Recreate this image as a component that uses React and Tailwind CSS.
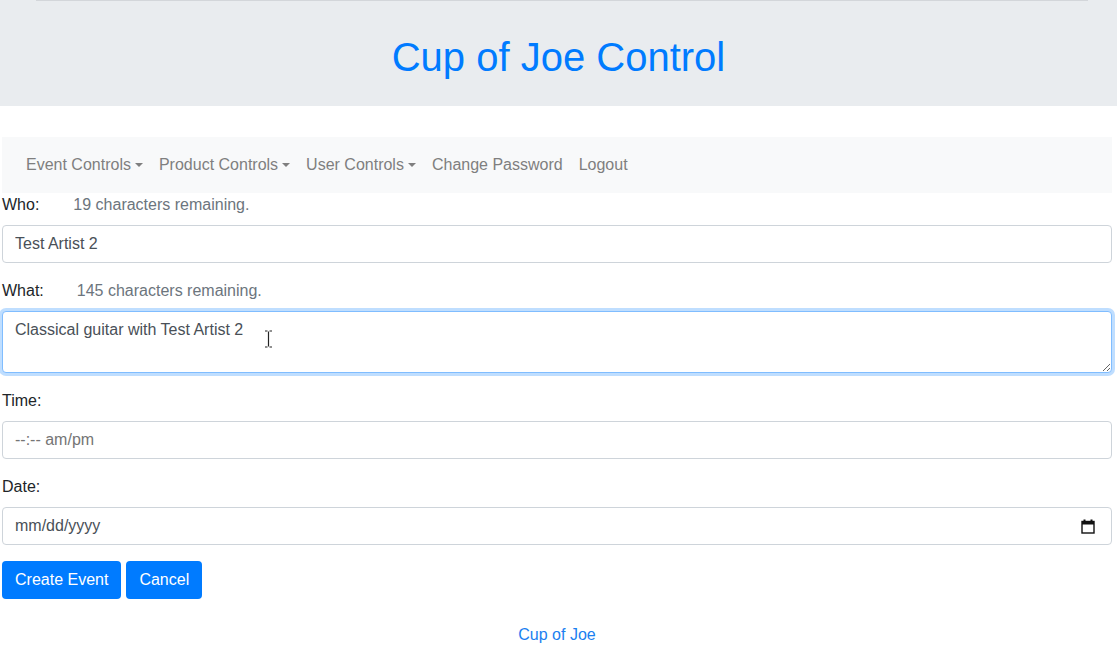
import React from 'react';

const NAV = [
  { label: 'Event Controls', caret: true },
  { label: 'Product Controls', caret: true },
  { label: 'User Controls', caret: true },
  { label: 'Change Password' },
  { label: 'Logout' },
];

const Caret = () => (
  <span className="ml-[4px] inline-block align-[3px] border-x-[4px] border-t-[4px] border-x-transparent border-t-[#7f7f7f]" />
);

const inputCls =
  'block w-full h-[38px] px-[12px] py-[6px] text-[16px] leading-[24px] text-[#495057] bg-white border border-[#ced4da] rounded-[4px] outline-none';

const App = () => {
  return (
    <div className="min-h-[650px] bg-white font-['Liberation_Sans',Arial,sans-serif] text-[16px] leading-[24px] text-[#212529]">
      <header className="bg-[#e9ecef] h-[106px] flex flex-col">
        <div className="ml-[36px] w-[1052px] h-px bg-[#d3d6da]" />
        <h1 className="flex-1 flex items-center justify-center text-[40px] leading-[48px] font-normal text-[#007bff] pt-[6px]">
          Cup of Joe Control
        </h1>
      </header>

      <div className="w-[1110px] ml-[2px]">
        <nav className="mt-[31px] bg-[#f8f9fa] px-[16px] py-[8px] flex items-center">
          {NAV.map(({ label, caret }) => (
            <a key={label} className="px-[8px] py-[8px] text-[#7f7f7f] whitespace-nowrap">
              {label}
              {caret && <Caret />}
            </a>
          ))}
        </nav>

        <form className="flex flex-col">
          <div className="mb-[16px]">
            <label className="flex mb-[8px]">
              <span>Who:</span>
              <span className="ml-[34px] text-[#6c757d]">19 characters remaining.</span>
            </label>
            <input className={inputCls} readOnly defaultValue="Test Artist 2" />
          </div>

          <div className="mb-[16px]">
            <label className="flex mb-[8px]">
              <span>What:</span>
              <span className="ml-[33px] text-[#6c757d]">145 characters remaining.</span>
            </label>
            <div className="relative">
              <textarea
                rows={2}
                readOnly
                defaultValue="Classical guitar with Test Artist 2"
                className="block w-full h-[62px] px-[12px] py-[6px] text-[16px] leading-[24px] text-[#495057] bg-white border border-[#80bdff] rounded-[4px] outline-none shadow-[0_0_0_3px_rgba(0,123,255,0.25)]"
              />
              <svg className="absolute left-[262px] top-[19px]" width="9" height="18" viewBox="0 0 9 18">
                <path d="M1 1h2.5M5.5 1H8M4.5 1.5v15M1 17h2.5M5.5 17H8" stroke="#222" strokeWidth="1.2" fill="none" />
              </svg>
            </div>
          </div>

          <div className="mb-[16px]">
            <label className="block mb-[8px]">Time:</label>
            <div className={inputCls + ' text-[#757575]'}>--:-- am/pm</div>
          </div>

          <div className="mb-[16px]">
            <label className="block mb-[8px]">Date:</label>
            <div className={inputCls + ' flex items-center justify-between pr-[16px]'}>
              <span>mm/dd/yyyy</span>
              <svg width="14" height="15" viewBox="0 0 14 15">
                <rect x="2.5" y="0.5" width="2" height="3" fill="#111" />
                <rect x="9.5" y="0.5" width="2" height="3" fill="#111" />
                <rect x="1" y="2.5" width="12" height="11.5" fill="none" stroke="#111" strokeWidth="1.4" />
                <rect x="1" y="2.5" width="12" height="3" fill="#111" />
              </svg>
            </div>
          </div>

          <div className="flex gap-[5px]">
            <button type="button" className="h-[38px] px-[13px] rounded-[4px] bg-[#007bff] text-white">
              Create Event
            </button>
            <button type="button" className="h-[38px] px-[13px] rounded-[4px] bg-[#007bff] text-white">
              Cancel
            </button>
          </div>
        </form>

        <footer className="mt-[24px] text-center text-[#1a80f0]">Cup of Joe</footer>
      </div>
    </div>
  );
};

export default App;
